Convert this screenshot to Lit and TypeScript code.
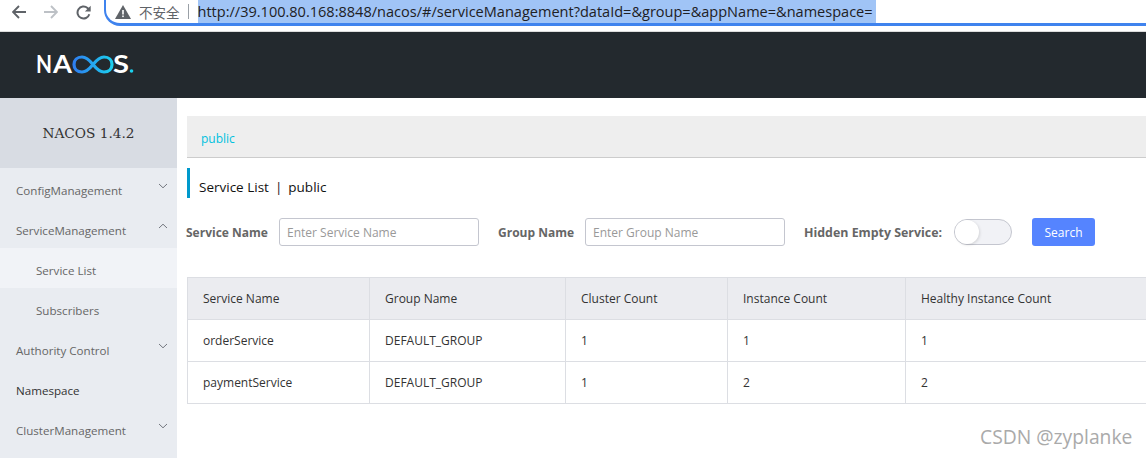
import { LitElement, html, css } from "lit";
import { customElement } from "lit/decorators.js";

const chevron = (up: boolean) => html`<svg class="chev" width="10" height="6" viewBox="0 0 10 6">
  <path d=${up ? "M1 5L5 1.2L9 5" : "M1 1L5 4.8L9 1"} fill="none" stroke="#73777f" stroke-width="1"/></svg>`;

const logo = html`<svg class="logo" width="100" height="24" viewBox="0 0 100 24">
  <defs><linearGradient id="g" gradientUnits="userSpaceOnUse" x1="35" x2="76" y1="0" y2="0"><stop offset="0" stop-color="#2f7bf0"/><stop offset="1" stop-color="#1bd0ee"/></linearGradient></defs>
  <text x="-1" y="19.500" font-family="Lato, sans-serif" font-weight="700" font-size="24" fill="#fff" textLength="16" lengthAdjust="spacingAndGlyphs">N</text>
  <text x="16" y="19.500" font-family="Lato, sans-serif" font-weight="700" font-size="24" fill="#fff" textLength="19" lengthAdjust="spacingAndGlyphs">A</text>
  <path d="M56 11.500C52 6.500 49 4 45 4C40 4 37 7 37 11.500C37 16 40 19 45 19C49 19 52 16.500 56 11.500C60 6.500 63 4 67 4C72 4 75 7 75 11.500C75 16 72 19 67 19C63 19 60 16.500 56 11.500" fill="none" stroke="url(#g)" stroke-width="3.200"/>
  <text x="76" y="19.500" font-family="Lato, sans-serif" font-weight="700" font-size="24" fill="#fff" textLength="16" lengthAdjust="spacingAndGlyphs">S</text>
  <circle cx="94.500" cy="18" r="1.800" fill="#1bd0ee"/>
</svg>`;

@customElement("app-root")
export class AppRoot extends LitElement {
  static styles = css`
    :host { display: block; position: relative; width: 1146px; height: 458px; overflow: hidden; background: #fff; font-family: "Open Sans", "Noto Sans", sans-serif; font-size: 12px; color: #333; }
    .chrome { height: 31px; display: flex; align-items: flex-start; background: #fff; border-bottom: 1px solid #dcdcdc; }
    .nav { display: flex; align-items: center; height: 24px; gap: 18px; padding-left: 12px; width: 92px; flex: none; }
    .omni { height: 26px; box-sizing: border-box; flex: 1; border-bottom: 3px solid #3f83ee; border-left: 2px solid #3f83ee; border-radius: 0 0 0 16px; display: flex; align-items: center; padding-left: 9px; }
    .warn { margin-right: 8px; flex: none; }
    .insecure { font-family: "Noto Sans CJK SC", sans-serif; font-size: 13.500px; color: #5f6368; white-space: nowrap; }
    .sep { width: 1px; height: 15px; background: #9aa0a6; margin: 0 9px 0 8px; flex: none; }
    .url { background: #a0c4f6; color: #202124; font-family: "Open Sans", sans-serif; font-size: 14.540px; line-height: 23px; height: 23px; width: 678px; white-space: nowrap; flex: none; }
    .top { height: 66px; background: #23292e; display: flex; align-items: center; padding-left: 37px; }
    .logo { display: block; overflow: visible; }
    .body { display: flex; height: 360px; }
    aside { width: 177px; background: #e9ecf1; flex: none; }
    .brand { height: 70px; background: #d8dce3; display: flex; align-items: center; justify-content: center; font-family: "DejaVu Serif", serif; font-size: 13.700px; color: #333; padding-bottom: 1px; box-sizing: border-box; }
    .item { height: 40px; display: flex; align-items: center; justify-content: space-between; padding: 0 9px 0 16px; color: #666; font-size: 11.600px; }
    .item > span { padding-top: 4px; }
    .item.ns { color: #333; }
    .item.sub { padding-left: 36px; }
    .item.active { background: #f1f3f7; }
    .chev { margin-top: -4px; }
    main { flex: 1; padding: 18px 0 0 10px; min-width: 0; }
    .crumb { background: #eee; border-bottom: 1px solid #ccc; display: flex; align-items: center; padding: 3px 0 0 14px; height: 38px; color: #00c1de; }
    .title { margin-top: 10px; height: 30px; box-sizing: border-box; border-left: 3px solid #09c; padding: 7px 0 0 9px; display: flex; align-items: center; font-size: 13.500px; color: #111; gap: 6px; }
    .form { margin-top: 20px; display: flex; align-items: center; height: 28px; margin-left: -1px; }
    .form label { font-weight: 700; color: #666; white-space: nowrap; font-size: 12px; flex: none; }
    .l1 { width: 82px; }
    .l2 { width: 76px; margin-left: 19px; }
    .l3 { width: 139px; margin-left: 19px; }
    .form label.l3 { font-size: 12.400px; }
    .input { width: 200px; height: 28px; box-sizing: border-box; border: 1px solid #c4c6cf; border-radius: 3px; display: flex; align-items: center; padding-left: 7px; color: #999; margin-left: 11px; flex: none; }
    .toggle { width: 58px; height: 26px; box-sizing: border-box; border: 1px solid #c4c6cf; border-radius: 13px; background: #f1f2f6; margin-left: 11px; display: flex; flex: none; }
    .knob { width: 24px; height: 24px; border-radius: 50%; background: #fff; box-shadow: 1px 1px 3px rgba(0,0,0,.12); }
    .btn { margin-left: 20px; width: 63px; height: 28px; background: #5584ff; color: #fff; border-radius: 3px; display: flex; align-items: center; justify-content: center; flex: none; }
    table { margin-top: 31px; width: 100%; border-collapse: collapse; table-layout: fixed; color: #333; }
    th, td { height: 41px; padding: 0 0 0 15px; text-align: left; font-weight: 400; border: 1px solid #dcdee3; white-space: nowrap; }
    th { background: #ebecf0; }
    tr > :last-child { border-right: none; }
    .wm { position: absolute; left: 980px; top: 425px; font-family: "Open Sans", sans-serif; font-size: 19.300px; color: #aaa; line-height: 24px; }
  `;

  render() {
    return html`
      <div class="chrome">
        <div class="nav">
          <svg width="14" height="14" viewBox="0 0 14 14"><path d="M14 7H1.500M7 1L1 7l6 6" fill="none" stroke="#5f6368" stroke-width="1.900"/></svg>
          <svg width="14" height="14" viewBox="0 0 14 14"><path d="M0 7H12.500M7 1l6 6-6 6" fill="none" stroke="#bdc1c6" stroke-width="1.900"/></svg>
          <svg width="15" height="15" viewBox="0 0 15 15"><path d="M13.300 9.200A6 6 0 1 1 11.500 3L13.300 4.800" fill="none" stroke="#5f6368" stroke-width="2"/><path d="M14.700 0.800V6.600H8.900z" fill="#5f6368"/></svg>
        </div>
        <div class="omni">
          <svg class="warn" width="16" height="14" viewBox="0 0 16 14"><path d="M8 0L16 14H0z" fill="#5f6368"/><rect x="7.200" y="5" width="1.600" height="4.500" fill="#fff"/><rect x="7.200" y="10.500" width="1.600" height="1.600" fill="#fff"/></svg>
          <span class="insecure">不安全</span><span class="sep"></span>
          <span class="url">http://39.100.80.168:8848/nacos/#/serviceManagement?dataId=&amp;group=&amp;appName=&amp;namespace=</span>
        </div>
      </div>
      <div class="top">${logo}</div>
      <div class="body">
        <aside>
          <div class="brand">NACOS 1.4.2</div>
          <div class="item"><span>ConfigManagement</span>${chevron(false)}</div>
          <div class="item"><span>ServiceManagement</span>${chevron(true)}</div>
          <div class="item sub active"><span>Service List</span></div>
          <div class="item sub"><span>Subscribers</span></div>
          <div class="item"><span>Authority Control</span>${chevron(false)}</div>
          <div class="item ns"><span>Namespace</span></div>
          <div class="item"><span>ClusterManagement</span>${chevron(false)}</div>
        </aside>
        <main>
          <div class="crumb">public</div>
          <div class="title"><span>Service List</span><span>|</span><span>public</span></div>
          <div class="form">
            <label class="l1">Service Name</label><div class="input">Enter Service Name</div>
            <label class="l2">Group Name</label><div class="input">Enter Group Name</div>
            <label class="l3">Hidden Empty Service:</label><div class="toggle"><div class="knob"></div></div>
            <div class="btn">Search</div>
          </div>
          <table>
            <colgroup><col style="width:182px"/><col style="width:196px"/><col style="width:162px"/><col style="width:178px"/><col/></colgroup>
            <thead><tr><th>Service Name</th><th>Group Name</th><th>Cluster Count</th><th>Instance Count</th><th>Healthy Instance Count</th></tr></thead>
            <tbody>
              <tr><td>orderService</td><td>DEFAULT_GROUP</td><td>1</td><td>1</td><td>1</td></tr>
              <tr><td>paymentService</td><td>DEFAULT_GROUP</td><td>1</td><td>2</td><td>2</td></tr>
            </tbody>
          </table>
        </main>
      </div>
      <div class="wm">CSDN @zyplanke</div>
    `;
  }
}
